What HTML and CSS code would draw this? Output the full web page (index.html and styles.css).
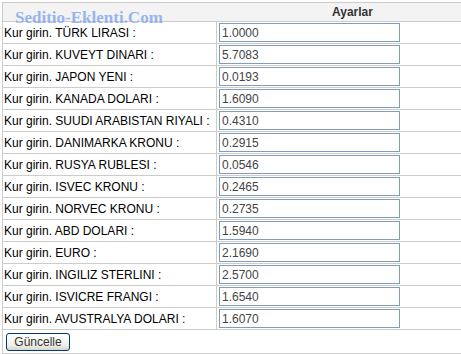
FILE: index.html
```html
<!DOCTYPE html>
<html>
<head>
<meta charset="utf-8">
<link rel="stylesheet" href="styles.css">
</head>
<body>
<div class="wrap">
<div class="watermark">Seditio-Eklenti.Com</div>
<form>
<table class="cfg">
<colgroup><col class="c1"><col class="c2"></colgroup>
<tr><th colspan="2" class="head">Ayarlar</th></tr>
<tr><td class="lbl">Kur girin. TÜRK LIRASI :</td><td class="val"><input class="fld" value="1.0000"></td></tr>
<tr><td class="lbl">Kur girin. KUVEYT DINARI :</td><td class="val"><input class="fld" value="5.7083"></td></tr>
<tr><td class="lbl">Kur girin. JAPON YENI :</td><td class="val"><input class="fld" value="0.0193"></td></tr>
<tr><td class="lbl">Kur girin. KANADA DOLARI :</td><td class="val"><input class="fld" value="1.6090"></td></tr>
<tr><td class="lbl">Kur girin. SUUDI ARABISTAN RIYALI :</td><td class="val"><input class="fld" value="0.4310"></td></tr>
<tr><td class="lbl">Kur girin. DANIMARKA KRONU :</td><td class="val"><input class="fld" value="0.2915"></td></tr>
<tr><td class="lbl">Kur girin. RUSYA RUBLESI :</td><td class="val"><input class="fld" value="0.0546"></td></tr>
<tr><td class="lbl">Kur girin. ISVEC KRONU :</td><td class="val"><input class="fld" value="0.2465"></td></tr>
<tr><td class="lbl">Kur girin. NORVEC KRONU :</td><td class="val"><input class="fld" value="0.2735"></td></tr>
<tr><td class="lbl">Kur girin. ABD DOLARI :</td><td class="val"><input class="fld" value="1.5940"></td></tr>
<tr><td class="lbl">Kur girin. EURO :</td><td class="val"><input class="fld" value="2.1690"></td></tr>
<tr><td class="lbl">Kur girin. INGILIZ STERLINI :</td><td class="val"><input class="fld" value="2.5700"></td></tr>
<tr><td class="lbl">Kur girin. ISVICRE FRANGI :</td><td class="val"><input class="fld" value="1.6540"></td></tr>
<tr><td class="lbl">Kur girin. AVUSTRALYA DOLARI :</td><td class="val"><input class="fld" value="1.6070"></td></tr>
<tr><td colspan="2" class="act"><button type="button" class="btn">Güncelle</button></td></tr>
</table>
</form>
</div>
</body>
</html>
```
FILE: styles.css
```css
html, body {
  margin: 0;
  padding: 0;
  overflow: hidden;
  background: #fff;
}
.wrap {
  position: relative;
  padding: 2px 0 0 2px;
  font-family: "Liberation Sans", Arial, sans-serif;
  font-size: 12px;
  color: #000;
}
form { margin: 0; }
.cfg {
  border-collapse: collapse;
  width: 701px;
  table-layout: fixed;
}
.c1 { width: 214px; }
.cfg td, .cfg th {
  border: 1px solid #cccccc;
  padding: 0;
}
.head {
  height: 18px;
  background: #f3f3f3;
  font-weight: bold;
  color: #333;
  text-align: center;
  font-size: 12px;
}
.lbl {
  height: 21px;
  padding: 0 0 0 1px !important;
  white-space: nowrap;
  overflow: hidden;
  vertical-align: middle;
}
.val {
  height: 21px;
  padding: 0 0 0 2px !important;
  vertical-align: middle;
}
.fld {
  display: block;
  box-sizing: border-box;
  width: 181px;
  height: 19px;
  margin: 0;
  padding: 0 0 0 2px;
  border: 1px solid #7f9db9;
  font-family: "Liberation Sans", Arial, sans-serif;
  font-size: 12px;
  color: #444;
  background: #fff;
  outline: none;
}
.act {
  height: 23px;
  padding: 0 0 0 3px !important;
  vertical-align: middle;
}
.btn {
  display: block;
  box-sizing: border-box;
  width: 64px;
  height: 18px;
  margin: 0;
  padding: 0;
  border: 1px solid #003c74;
  border-radius: 3px;
  background: linear-gradient(#ffffff, #f0f0ea 70%, #d8d4c8);
  font-family: "Liberation Sans", Arial, sans-serif;
  font-size: 12px;
  color: #333;
}
.watermark {
  position: absolute;
  left: 15px;
  top: 8px;
  font-family: "Liberation Serif", "Times New Roman", serif;
  font-weight: bold;
  font-size: 17px;
  color: rgba(120, 160, 240, 0.75);
  pointer-events: none;
  z-index: 2;
  white-space: nowrap;
}
```
